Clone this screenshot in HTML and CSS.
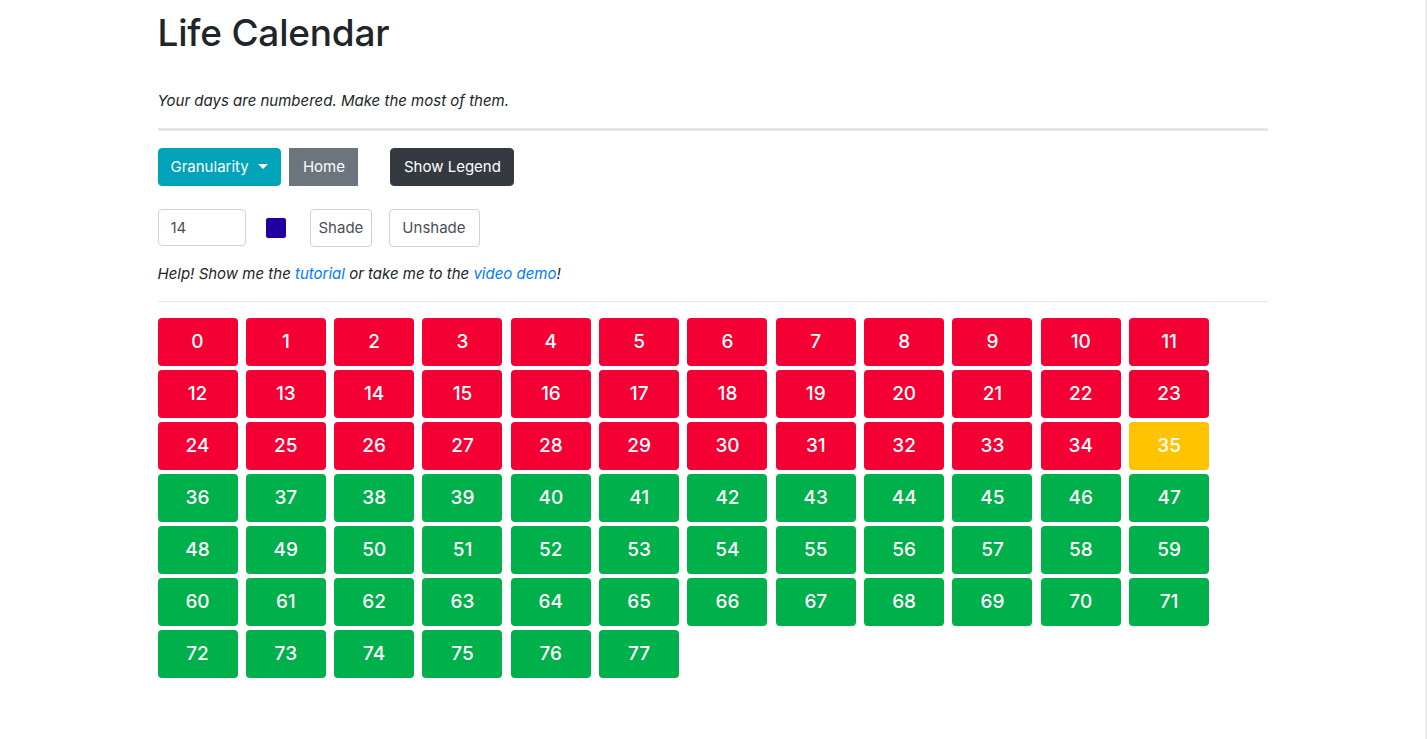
FILE: index.html
```html
<!DOCTYPE html>
<html>
<head>
<meta charset="utf-8">
<link rel="stylesheet" href="styles.css">
</head>
<body>
<div class="container">
  <h1 class="title">Life Calendar</h1>
  <p class="lead">Your days are numbered. Make the most of them.</p>
  <hr class="thick">
  <div class="toolbar">
    <div class="group">
      <button class="btn btn-info">Granularity <span class="caret"></span></button>
      <button class="btn btn-secondary">Home</button>
    </div>
    <button class="btn btn-dark">Show Legend</button>
  </div>
  <div class="shade-row">
    <input class="num" type="text" value="14">
    <span class="swatch"></span>
    <button class="btn btn-light btn-shade">Shade</button>
    <button class="btn btn-light btn-unshade">Unshade</button>
  </div>
  <p class="help">Help! Show me the <a href="#">tutorial</a> or take me to the <a href="#">video demo</a>!</p>
  <hr class="thin">
  <div class="grid" id="grid"></div>
</div>
<script src="script.js"></script>
</body>
</html>
```
FILE: script.js
```js
var g = document.getElementById('grid');
for (var i = 0; i < 78; i++) {
  var d = document.createElement('div');
  d.className = 'cell ' + (i < 35 ? 'past' : (i === 35 ? 'now' : 'future'));
  d.textContent = i;
  g.appendChild(d);
}
```
FILE: styles.css
```css
html, body { margin: 0; padding: 0; background: #fff; }
body {
  font-family: Inter, "Liberation Sans", sans-serif;
  color: #212529;
  font-size: 16px;
  line-height: 1.5;
  border-right: 2px solid #ececec;
  min-height: 739px;
  box-sizing: border-box;
}
.container { width: 1110px; margin: 0 auto; padding: 0 15px; }
.title { font-size: 37px; font-weight: 500; line-height: 1.2; margin: 0; padding-top: 11px; letter-spacing: -0.2px; }
.lead { font-style: italic; font-size: 15px; margin: 35px 0 0; }
hr { border: 0; margin: 0; }
.thick { border-top: 3px solid #e5e6e8; margin-top: 15px; }
.thin { border-top: 1px solid #e6e7e9; margin-top: 16px; }
.toolbar { display: flex; margin-top: 17px; gap: 32px; }
.group { display: flex; gap: 8px; }
.btn {
  font-family: inherit; font-size: 15px; line-height: 22px; padding: 7px 12px;
  border: 1px solid transparent; border-radius: 4px; color: #fff; cursor: pointer;
}
.btn-info { background: #00a3b8; border-color: #00a3b8; }
.btn-secondary { background: #6c757d; border-color: #6c757d; border-radius: 0; padding: 7px 12px 7px 13px; }
.btn-dark { background: #343a40; border-color: #343a40; padding: 7px 12px 7px 13px; }
.caret { display: inline-block; width: 0; height: 0; border-left: 5px solid transparent; border-right: 5px solid transparent; border-top: 5px solid #fff; vertical-align: 3px; margin-left: 5px; }
.shade-row { display: flex; align-items: center; margin-top: 23px; }
.num { width: 88px; height: 37px; box-sizing: border-box; border: 1px solid #ced4da; border-radius: 4px; padding: 0 12px; font-family: inherit; font-size: 15px; color: #495057; }
.swatch { width: 20px; height: 20px; background: #2200a0; border-radius: 2px; margin: 0 24px 0 20px; }
.btn-light { background: #fff; border-color: #ced4da; color: #495057; }
.btn-shade { padding: 7px 8px; margin-right: 17px; }
.btn-unshade { padding: 7px 13px 7px 12px; }
.help { font-style: italic; font-size: 15px; margin: 16px 0 0; }
.help a { color: #007bff; text-decoration: none; }
.grid { display: grid; grid-template-columns: repeat(12, 80px); column-gap: 8.33px; row-gap: 4px; margin-top: 16px; }
.cell { height: 48px; border-radius: 4px; color: #fff; display: flex; align-items: center; justify-content: center; font-size: 19px; font-weight: 500; }
.past { background: #f40034; }
.now { background: #ffc300; }
.future { background: #00b04b; }
```
